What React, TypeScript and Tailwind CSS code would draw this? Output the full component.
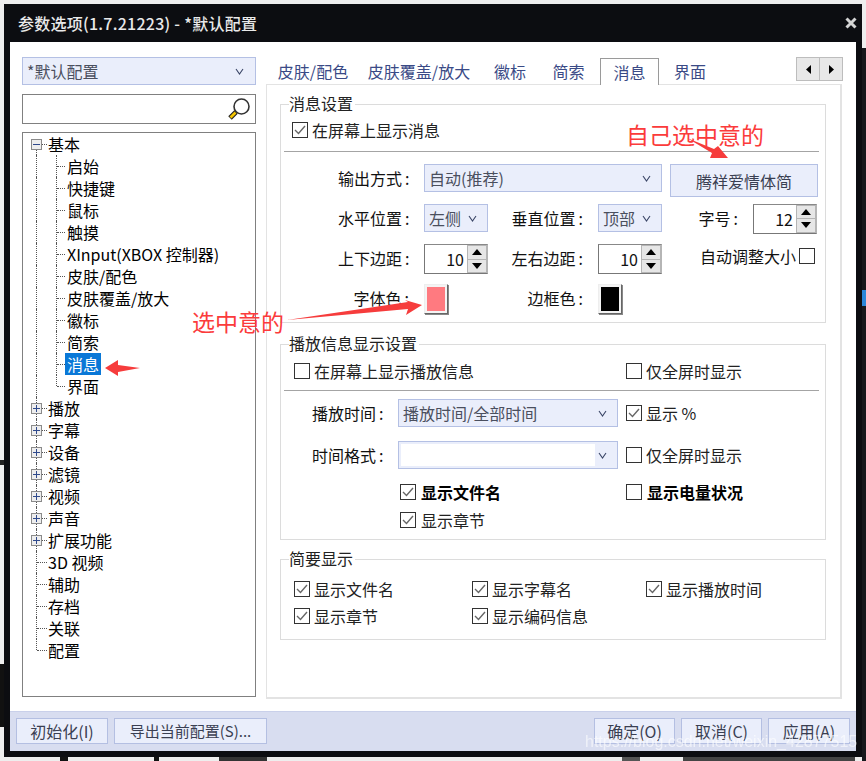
import { FC, ReactNode } from "react"

const font = "font-['Noto_Sans_CJK_SC','Liberation_Sans',sans-serif]"

const Chevron: FC = () => (
  <svg width="9" height="7" viewBox="0 0 9 7" className="shrink-0">
    <path d="M1 1 L4.5 6 L8 1" fill="none" stroke="#3a4566" strokeWidth="1.1" />
  </svg>
)

const Combo: FC<{ text?: string; w: string; inner?: boolean }> = ({ text, w, inner }) => (
  <div className={`${w} h-[28px] shrink-0 flex items-center justify-between border border-[#b4c0e4] bg-[#eaeefb] pl-[4px] pr-[10px] text-[#4a4f5e]`}>
    {inner ? <div className="w-[194px] h-[22px] -ml-[2px] bg-white" /> : <span>{text}</span>}
    <Chevron />
  </div>
)

const Spin: FC<{ value: string }> = ({ value }) => (
  <div className="w-[64px] h-[30px] shrink-0 flex border border-[#777] border-r-[#b5b5b5] border-t-[#888] bg-white">
    <div className="flex-1 flex items-center justify-end pr-[3px] text-[#111]">{value}</div>
    <div className="w-[20px] flex flex-col gap-px bg-[#b5b5b5] p-px">
      <div className="flex-1 bg-[#e6e6e6] flex items-center justify-center">
        <svg width="10" height="6" viewBox="0 0 10 6"><path d="M5 0 L10 6 L0 6 Z" fill="#000" /></svg>
      </div>
      <div className="flex-1 bg-[#e6e6e6] flex items-center justify-center">
        <svg width="10" height="6" viewBox="0 0 10 6"><path d="M0 0 L10 0 L5 6 Z" fill="#000" /></svg>
      </div>
    </div>
  </div>
)

const Check: FC<{ on?: boolean; label?: string; bold?: boolean; gap?: string }> = ({ on, label, bold, gap = "ml-[5px]" }) => (
  <div className="flex items-center">
    <span className="w-[16px] h-[16px] shrink-0 border border-[#333] bg-white flex items-center justify-center">
      {on && (
        <svg width="12" height="10" viewBox="0 0 12 10"><path d="M1 5 L4.5 8.5 L11 1" fill="none" stroke="#666" strokeWidth="1.4" /></svg>
      )}
    </span>
    {label && <span className={`${gap} whitespace-nowrap ${bold ? "font-bold text-black" : "text-[#222]"}`}>{label}</span>}
  </div>
)

const Label: FC<{ w: string; text: string; up?: boolean }> = ({ w, text, up }) => (
  <span className={`${w} shrink-0 pr-[2px] text-right whitespace-nowrap text-[#111] ${up ? "-mt-[2px]" : ""}`}>
    {text}
    <span className="ml-[3px]">:</span>
  </span>
)

const Swatch: FC<{ color: string }> = ({ color }) => (
  <div className="w-[24px] h-[30px] shrink-0 border border-[#eee] border-r-[#666] border-b-[#666] bg-[#f4f4f4] p-[2px] shadow-[1px_1px_0_#888]">
    <div className={`w-full h-full ${color}`} />
  </div>
)

const Group: FC<{ title: string; h: string; children: ReactNode }> = ({ title, h, children }) => (
  <div className={`relative w-[546px] ${h} shrink-0 border border-[#dcdcdc]`}>
    <span className="absolute left-[8px] -top-[13px] bg-white pr-[2px] h-[22px] text-[#222]">{title}</span>
    {children}
  </div>
)

const Tab: FC<{ text: string; w: string; active?: boolean }> = ({ text, w, active }) => (
  <div className={`${w} shrink-0 flex items-center justify-center whitespace-nowrap text-[#3a4a86] ${active ? "bg-white border border-b-0 border-[#9a9a9a] relative z-10 h-[27px] -mb-px" : "h-[26px]"}`}>
    {text}
  </div>
)

const Box: FC<{ open?: boolean }> = ({ open }) => (
  <span className="w-[11px] h-[11px] shrink-0 border border-[#8a8a8a] bg-[#eeeeee] relative flex items-center justify-center">
    <span className="w-[7px] h-px bg-[#2f4a8c]" />
    {!open && <span className="absolute w-px h-[7px] bg-[#2f4a8c]" />}
  </span>
)

const RootRow: FC<{ text: string; box?: boolean; open?: boolean; first?: boolean; last?: boolean }> = ({ text, box, open, first, last }) => (
  <div className="h-[22px] flex items-center text-black">
    <div className="w-[11px] h-full ml-[8px] relative flex items-center justify-center shrink-0">
      <span className={`absolute left-[5px] w-px border-l border-dotted border-[#555] ${first ? "top-[11px] bottom-0" : last ? "top-0 h-[11px]" : "top-0 bottom-0"}`} />
      {box ? <Box open={open} /> : null}
    </div>
    <span className={`border-t border-dotted border-[#555] ${box ? "w-[5px] ml-0" : "w-[10px] -ml-[5px]"} mr-px`} />
    <span className="whitespace-nowrap">{text}</span>
  </div>
)

const ChildRow: FC<{ text: string; selected?: boolean; last?: boolean }> = ({ text, selected, last }) => (
  <div className="h-[22px] flex items-center text-black">
    <div className="w-[25px] h-full ml-[8px] relative shrink-0">
      <span className="absolute left-[5px] top-0 bottom-0 border-l border-dotted border-[#555]" />
    </div>
    <div className="w-[20px] h-full relative shrink-0">
      <span className={`absolute left-0 border-l border-dotted border-[#555] top-0 ${last ? "h-[11px]" : "bottom-0"}`} />
    </div>
    <span className="border-t border-dotted border-[#555] w-[8px] -ml-[19px] relative" />
    <span className={`whitespace-nowrap h-[22px] leading-[22px] px-[2px] ${selected ? "bg-[#0a78d7] text-white" : ""}`}>{text}</span>
  </div>
)

const children1 = ["启始", "快捷键", "鼠标", "触摸", "XInput(XBOX 控制器)", "皮肤/配色", "皮肤覆盖/放大", "徽标", "简索"]
const roots1 = ["播放", "字幕", "设备", "滤镜", "视频", "声音", "扩展功能"]
const roots2 = ["3D 视频", "辅助", "存档", "关联"]

const FootBtn: FC<{ w: string; children: ReactNode }> = ({ w, children }) => (
  <div className={`${w} h-[26px] shrink-0 flex items-center justify-center border border-[#b4bfe2] bg-[#eaeefb] text-[#3a3f52] whitespace-nowrap`}>{children}</div>
)

const App: FC = () => {
  return (
    <div className={`${font} relative w-[866px] h-[761px] overflow-hidden bg-[#eeeeee] text-[16px] leading-[22px]`}>
      {/* desktop behind the dialog */}
      <div className="absolute right-0 top-[48px] bottom-0 w-[4px] bg-[#17181c]" />
      <div className="absolute right-0 top-[290px] w-[4px] h-[16px] bg-[#2a86d8]" />
      <div className="absolute left-0 top-[460px] w-[4px] h-[5px] bg-[#222]" />
      <div className="absolute left-0 top-[664px] w-[4px] h-[63px] bg-[#111]" />
      <div className="absolute left-[60px] top-[757px] w-[8px] h-[4px] bg-[#111]" />
      <div className="absolute left-[154px] top-[757px] w-[5px] h-[4px] bg-[#111]" />
      <div className="absolute left-[219px] top-[757px] w-[48px] h-[4px] bg-[#333]" />
      <div className="absolute left-[622px] top-[757px] w-[18px] h-[4px] bg-[#555]" />
      <div className="absolute left-[683px] top-[757px] w-[172px] h-[4px] bg-[#444]" />

      <div className="pt-[4px] pl-[4px]">
        <div className="relative w-[858px] h-[753px] bg-[#0c0d11] pl-[6px] pr-[6px] pb-[6px] flex flex-col">
          <div className="h-[38px] shrink-0 flex items-center justify-between pl-[8px] text-[#e9e9e9] font-medium">
            <span className="whitespace-nowrap tracking-[0.25px]">参数选项(1.7.21223) - *默认配置</span>
            <svg width="12" height="12" viewBox="0 0 12 12" className="-mr-[1px]">
              <path d="M1.5 1.5 L10.5 10.5 M10.5 1.5 L1.5 10.5" stroke="#d4d4d4" strokeWidth="3" />
            </svg>
          </div>

          <div className="flex-1 flex flex-col bg-white min-h-0">
            <div className="flex-1 flex pl-[12px] min-h-0">
              {/* left column */}
              <div className="w-[234px] shrink-0 flex flex-col pt-[15px]">
                <div className="h-[28px] flex items-center justify-between border border-[#b4c0e4] bg-[#eaeefb] pl-[4px] pr-[11px] text-[#4a4f5e]">
                  <span>*默认配置</span>
                  <Chevron />
                </div>
                <div className="h-[30px] mt-[9px] border border-[#808080] flex items-center justify-end pr-[4px]">
                  <svg width="24" height="24" viewBox="0 0 24 24">
                    <circle cx="14.5" cy="9.5" r="7.5" fill="#fff" stroke="#333" strokeWidth="1.6" />
                    <path d="M9 15 L3 21" stroke="#222" strokeWidth="5" />
                    <path d="M8.5 15.5 L3.5 20.5" stroke="#f3c400" strokeWidth="2.6" />
                  </svg>
                </div>
                <div className="h-[565px] mt-[8px] border border-[#808080] overflow-hidden">
                  <RootRow text="基本" box open first />
                  {children1.map((t) => <ChildRow key={t} text={t} />)}
                  <ChildRow text="消息" selected />
                  <ChildRow text="界面" last />
                  {roots1.map((t) => <RootRow key={t} text={t} box />)}
                  {roots2.map((t) => <RootRow key={t} text={t} />)}
                  <RootRow text="配置" last />
                </div>
              </div>

              {/* right column */}
              <div className="ml-[10px] w-[576px] shrink-0 flex flex-col pt-[16px]">
                <div className="h-[26px] flex items-end">
                  <div className="flex pl-[5px] w-[576px]">
                    <Tab text="皮肤/配色" w="w-[84px]" />
                    <Tab text="皮肤覆盖/放大" w="w-[128px]" />
                    <Tab text="徽标" w="w-[54px]" />
                    <Tab text="简索" w="w-[63px]" />
                    <Tab text="消息" w="w-[59px]" active />
                    <Tab text="界面" w="w-[62px]" />
                    <div className="ml-auto -mr-px flex h-[24px] -mt-px border border-[#bdbdbd] bg-[#bdbdbd] gap-px">
                      <div className="w-[22px] bg-[#e8e8e8] flex items-center justify-center">
                        <svg width="5" height="9" viewBox="0 0 5 9"><path d="M5 0 L5 9 L0 4.5 Z" fill="#000" /></svg>
                      </div>
                      <div className="w-[22px] bg-[#e8e8e8] flex items-center justify-center">
                        <svg width="5" height="9" viewBox="0 0 5 9"><path d="M0 0 L0 9 L5 4.5 Z" fill="#000" /></svg>
                      </div>
                    </div>
                  </div>
                </div>
                <div className="h-[615px] border-2 border-[#e3e3e3] border-t border-l pt-[19px] pl-[13px] flex flex-col">
                  <Group title="消息设置" h="h-[219px]">
                    <div className="h-[47px] pl-[8px] pt-[14px] border-b border-[#a4a4a4] ml-[3px] mr-[6px]">
                      <Check on label="在屏幕上显示消息" gap="ml-[4px]" />
                    </div>
                    <div className="flex pl-[57px] pt-[12px] items-start">
                      <div className="h-[28px] flex items-center"><Label w="w-[73px]" text="输出方式" /></div>
                      <div className="ml-[13px]"><Combo text="自动(推荐)" w="w-[238px]" /></div>
                      <div className="ml-[8px] w-[148px] h-[33px] flex items-center justify-center border border-[#b4c0e4] bg-[#eaeefb] text-[#3a3f52]">腾祥爱情体简</div>
                    </div>
                    <div className="flex pl-[57px] mt-[6px] items-center h-[30px]">
                      <Label w="w-[73px]" text="水平位置" />
                      <div className="ml-[13px]"><Combo text="左侧" w="w-[64px]" /></div>
                      <Label w="w-[97px]" text="垂直位置" />
                      <div className="ml-[13px]"><Combo text="顶部" w="w-[64px]" /></div>
                      <Label w="w-[78px]" text="字号" />
                      <div className="ml-[13px] mt-[1px]"><Spin value="12" /></div>
                    </div>
                    <div className="flex pl-[57px] mt-[11px] items-center h-[30px]">
                      <Label w="w-[73px]" text="上下边距" up />
                      <div className="ml-[13px]"><Spin value="10" /></div>
                      <Label w="w-[97px]" text="左右边距" up />
                      <div className="ml-[13px]"><Spin value="10" /></div>
                      <span className="ml-[38px] -mt-[6px] whitespace-nowrap text-[#111]">自动调整大小</span>
                      <span className="ml-[3px] -mt-[6px] w-[16px] h-[16px] border border-[#333] bg-white" />
                    </div>
                    <div className="flex pl-[57px] mt-[10px] items-center h-[30px]">
                      <Label w="w-[73px]" text="字体色" up />
                      <div className="ml-[13px]"><Swatch color="bg-[#ff7a80]" /></div>
                      <Label w="w-[137px]" text="边框色" up />
                      <div className="ml-[13px]"><Swatch color="bg-black" /></div>
                    </div>
                  </Group>

                  <div className="h-[21px] shrink-0" />
                  <Group title="播放信息显示设置" h="h-[196px]">
                    <div className="ml-[3px] mr-[6px] h-[46px] pl-[10px] pt-[15px] border-b border-[#a4a4a4] flex items-start">
                      <div className="w-[332px]"><Check label="在屏幕上显示播放信息" gap="ml-[4px]" /></div>
                      <Check label="仅全屏时显示" gap="ml-[4px]" />
                    </div>
                    <div className="flex pl-[31px] pt-[8px] items-center">
                      <Label w="w-[73px]" text="播放时间" />
                      <div className="ml-[13px]"><Combo text="播放时间/全部时间" w="w-[220px]" /></div>
                      <div className="ml-[8px]"><Check on label="显示 %" gap="ml-[4px]" /></div>
                    </div>
                    <div className="flex pl-[31px] mt-[14px] items-center">
                      <Label w="w-[73px]" text="时间格式" />
                      <div className="ml-[13px]"><Combo inner w="w-[220px]" /></div>
                      <div className="ml-[8px]"><Check label="仅全屏时显示" gap="ml-[4px]" /></div>
                    </div>
                    <div className="flex pl-[119px] mt-[12px]">
                      <div className="w-[226px]"><Check on bold label="显示文件名" /></div>
                      <Check bold label="显示电量状况" />
                    </div>
                    <div className="pl-[119px] mt-[6px]"><Check on label="显示章节" /></div>
                  </Group>

                  <div className="h-[19px] shrink-0" />
                  <Group title="简要显示" h="h-[81px]">
                    <div className="flex pl-[13px] pt-[18px]">
                      <div className="w-[178px]"><Check on label="显示文件名" gap="ml-[4px]" /></div>
                      <div className="w-[174px]"><Check on label="显示字幕名" gap="ml-[4px]" /></div>
                      <Check on label="显示播放时间" gap="ml-[4px]" />
                    </div>
                    <div className="flex pl-[13px] mt-[5px]">
                      <div className="w-[178px]"><Check on label="显示章节" gap="ml-[4px]" /></div>
                      <Check on label="显示编码信息" gap="ml-[4px]" />
                    </div>
                  </Group>
                </div>
              </div>
            </div>

            {/* footer */}
            <div className="h-[40px] shrink-0 bg-[#d8ddf0] border-t border-[#c9d0ea] flex items-start pt-[6px] pl-[6px] pr-[6px] gap-[6px]">
              <FootBtn w="w-[92px]">初始化(I)</FootBtn>
              <FootBtn w="w-[153px]"><span className="text-[15px]">导出当前配置(S)...</span></FootBtn>
              <div className="ml-auto flex gap-[6px]">
                <FootBtn w="w-[81px]">确定(O)</FootBtn>
                <FootBtn w="w-[81px]">取消(C)</FootBtn>
                <FootBtn w="w-[82px]">应用(A)</FootBtn>
              </div>
            </div>
          </div>
        </div>
      </div>

      {/* annotations pasted on top of the screenshot */}
      <span className="absolute left-[626px] top-[118px] text-[23px] leading-[32px] text-[#fb3b3b] whitespace-nowrap">自己选中意的</span>
      <span className="absolute left-[192px] top-[305px] text-[23px] leading-[32px] text-[#fb3b3b] whitespace-nowrap">选中意的</span>
      <svg width="866" height="761" viewBox="0 0 866 761" className="absolute left-0 top-0 pointer-events-none">
        <path d="M687 138 L714 149 L718 146 L728 158 L710 158 L712 153 Z" fill="#f63c3c" />
        <path d="M287 320 L408 302 L405 300 L422 305 L406 315 L408 309 Z" fill="#f63c3c" />
        <path d="M105 368 L118 360 L118 365 L140 368 L118 372 L118 376 Z" fill="#f63c3c" />
      </svg>
      <span className="absolute left-[585px] top-[732px] text-[16px] leading-[20px] font-['Liberation_Sans',sans-serif] text-white/60 whitespace-nowrap blur-[0.4px]">https://blog.csdn.net/weixin_42877515</span>
    </div>
  )
}
export default App
